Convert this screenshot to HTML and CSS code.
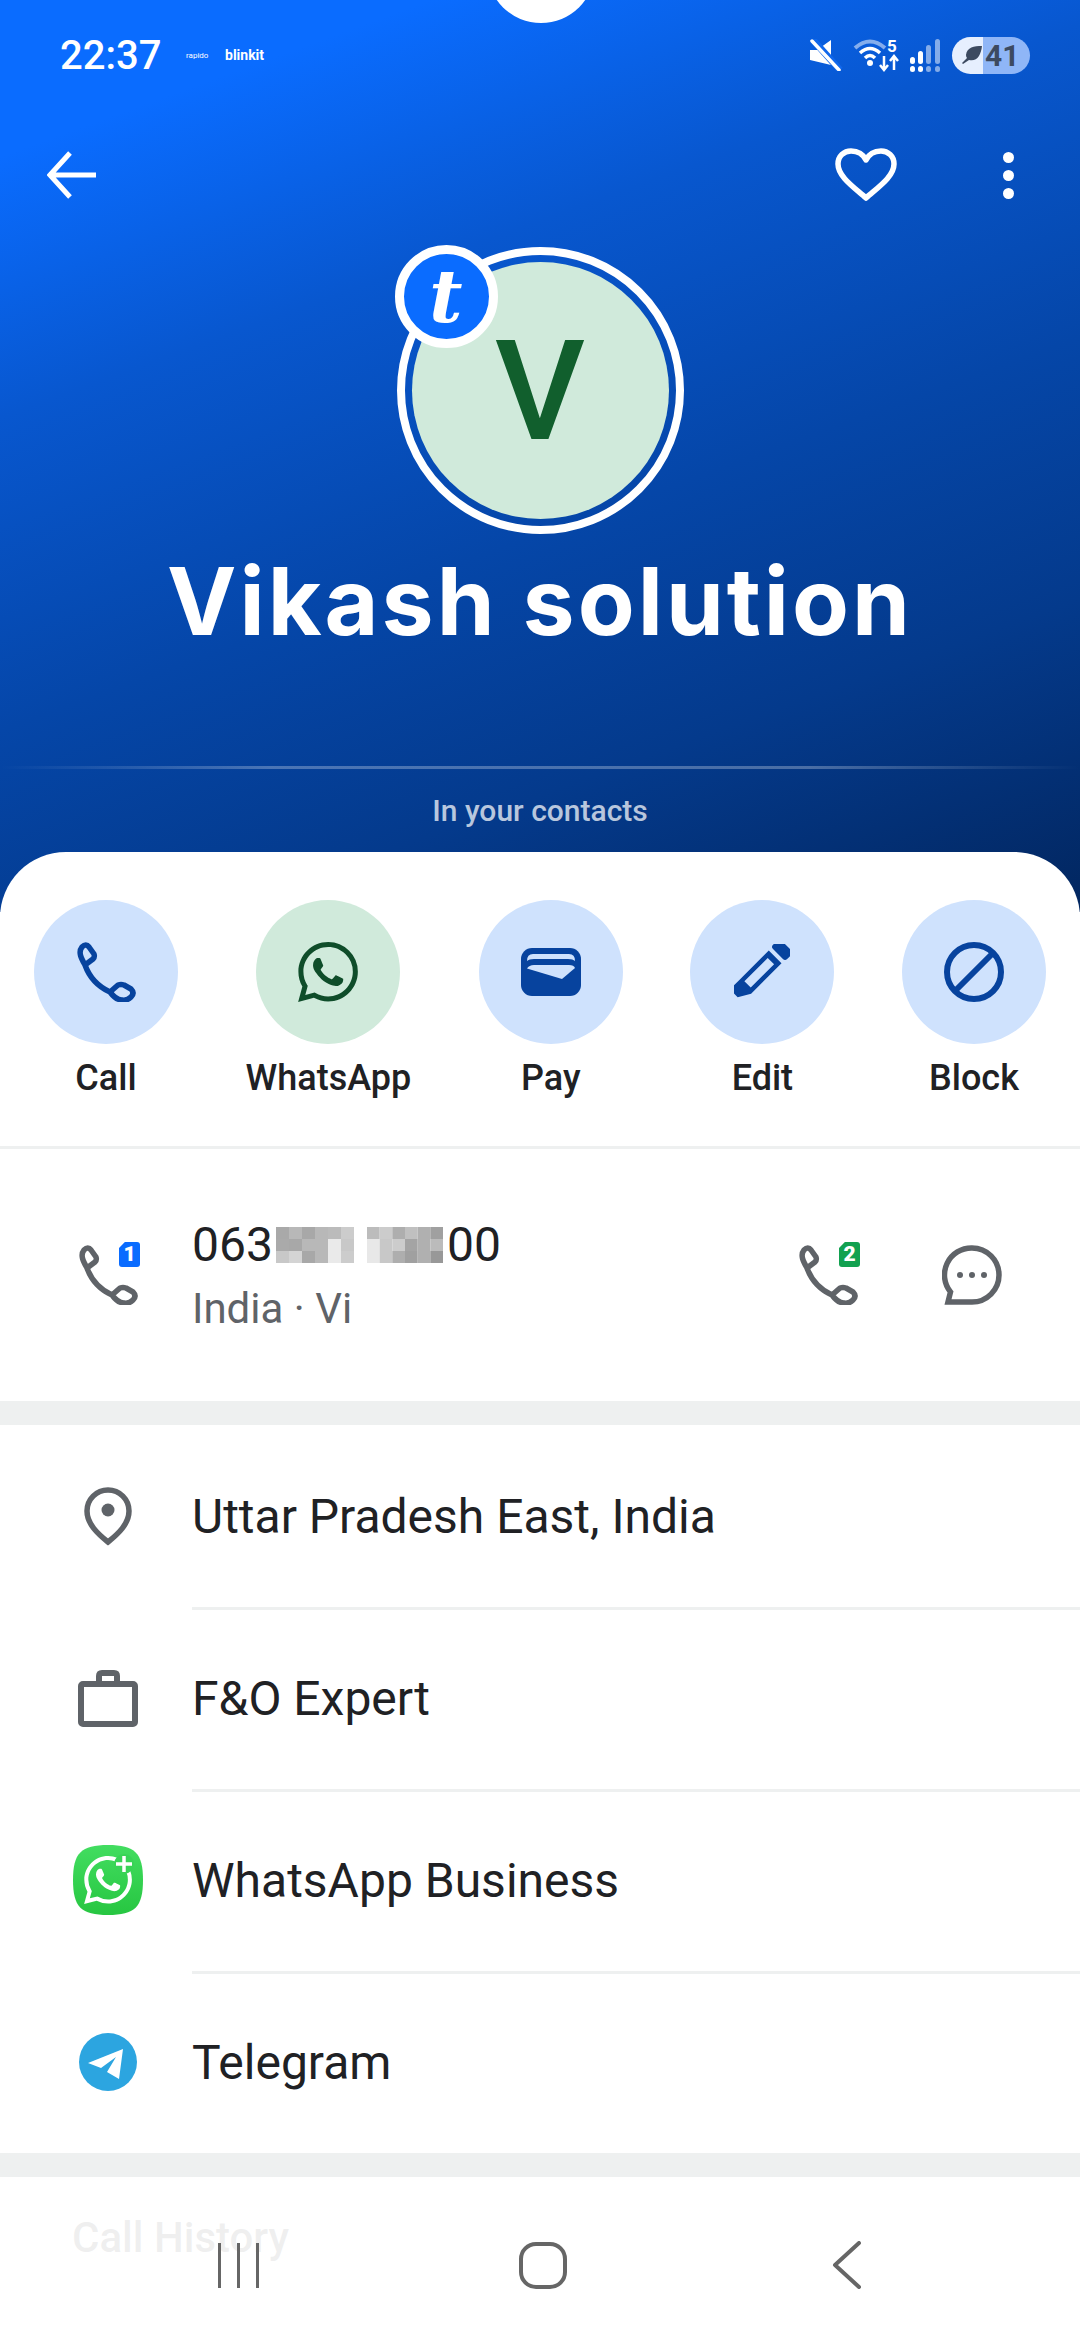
FILE: index.html
```html
<!DOCTYPE html>
<html lang="en">
<head>
    <meta charset="UTF-8">
    <meta name="viewport" content="width=device-width, initial-scale=1.0">
    <title>Vikash solution</title>
    <link rel="stylesheet" href="styles.css">
</head>
<body>

<svg class="sprites" width="0" height="0">
    <symbol id="phone" viewBox="0 0 60 60">
        <path d="M9 23C5 16 2 10 6 5Q10 1 13 5L18 12Q19 15 17 17L9 23ZM9 23C14 37 23 45 34 50L42 43Q45 42 48 43L55 47Q59 51 55 55Q51 59 46 58C42 58 37 54 34 50" fill="none" stroke="currentColor" stroke-width="5.5" stroke-linejoin="round" stroke-linecap="round"/>
    </symbol>
    <symbol id="whatsapp" viewBox="0 0 24 24">
        <path fill="currentColor" d="M17.472 14.382c-.297-.149-1.758-.867-2.03-.967-.273-.099-.471-.148-.67.15-.197.297-.767.966-.94 1.164-.173.199-.347.223-.644.075-.297-.15-1.255-.463-2.39-1.475-.883-.788-1.48-1.761-1.653-2.059-.173-.297-.018-.458.13-.606.134-.133.298-.347.446-.52.149-.174.198-.298.298-.497.099-.198.05-.371-.025-.52-.075-.149-.669-1.612-.916-2.207-.242-.579-.487-.5-.669-.51-.173-.008-.371-.01-.57-.01-.198 0-.52.074-.792.372-.272.297-1.04 1.016-1.04 2.479 0 1.462 1.065 2.875 1.213 3.074.149.198 2.096 3.2 5.077 4.487.709.306 1.262.489 1.694.625.712.227 1.36.195 1.871.118.571-.085 1.758-.719 2.006-1.413.248-.694.248-1.289.173-1.413-.074-.124-.272-.198-.57-.347m-5.421 7.403h-.004a9.87 9.87 0 01-5.031-1.378l-.361-.214-3.741.982.998-3.648-.235-.374a9.86 9.86 0 01-1.51-5.26c.001-5.45 4.436-9.884 9.888-9.884 2.64 0 5.122 1.03 6.988 2.898a9.825 9.825 0 012.893 6.994c-.003 5.45-4.437 9.884-9.885 9.884m8.413-18.297A11.815 11.815 0 0012.05 0C5.495 0 .16 5.335.157 11.892c0 2.096.547 4.142 1.588 5.945L.057 24l6.305-1.654a11.882 11.882 0 005.683 1.448h.005c6.554 0 11.89-5.335 11.893-11.893a11.821 11.821 0 00-3.48-8.413z"/>
    </symbol>
</svg>

<div class="screen">
    <header class="hero">
        <div class="camera"></div>

        <div class="status">
            <span class="time">22:37</span>
            <span class="notif-small">rapido</span>
            <span class="notif-big">blinkit</span>
            <div class="status-icons">
                <svg class="ic-mute" width="34" height="32" viewBox="0 0 34 32">
                    <path d="M1 11H8L22 1V26L1 21Z" fill="#fff"/>
                    <path d="M4 1L31 31" stroke="#1067ec" stroke-width="7"/>
                    <path d="M3 2L30 31" stroke="#fff" stroke-width="3.5" stroke-linecap="round"/>
                </svg>
                <svg class="ic-wifi" width="46" height="34" viewBox="0 0 46 34">
                    <path d="M2 10Q17 -3 32 10" fill="none" stroke="#fff" stroke-opacity=".5" stroke-width="4"/>
                    <path d="M7 15Q17 6 27 15" fill="none" stroke="#fff" stroke-width="3.5"/>
                    <path d="M12 20Q17 15 22 20" fill="none" stroke="#fff" stroke-width="3.5"/>
                    <circle cx="17" cy="25" r="3" fill="#fff"/>
                    <path d="M31 18V31M27 27L31 32L35 27M41 32V19M37 23L41 18L45 23" fill="none" stroke="#fff" stroke-width="2.5"/>
                </svg>
                <span class="wifi-num">5</span>
                <svg class="ic-signal" width="30" height="33" viewBox="0 0 30 33">
                    <g fill="#fff">
                        <rect x="0" y="18" width="5" height="7" rx="2.5"/>
                        <rect x="0" y="27" width="5" height="6" rx="2.5"/>
                        <rect x="8" y="12" width="5" height="13" rx="2.5"/>
                        <rect x="8" y="27" width="5" height="6" rx="2.5"/>
                    </g>
                    <g fill="#fff" fill-opacity=".5">
                        <rect x="16" y="6" width="5" height="19" rx="2.5"/>
                        <rect x="16" y="27" width="5" height="6" rx="2.5"/>
                        <rect x="25" y="0" width="5" height="25" rx="2.5"/>
                        <rect x="25" y="27" width="5" height="6" rx="2.5"/>
                    </g>
                </svg>
                <div class="battery">
                    <svg width="20" height="18" viewBox="0 0 20 18">
                        <path d="M20 0C12 0 5 1 4 9Q4 11 5 12L0 17L1 18L7 14C15 16 19 9 20 0Z" fill="#3c4a60"/>
                    </svg>
                    <span>41</span>
                </div>
            </div>
        </div>

        <div class="toolbar">
            <svg class="back" width="50" height="48" viewBox="0 0 50 48">
                <path d="M49 24H4M23 2L3 24L23 46" fill="none" stroke="#fff" stroke-width="5"/>
            </svg>
            <svg class="heart" width="62" height="54" viewBox="0 0 62 54">
                <path d="M31 50C20 40 3 29 3 16C3 8 9 3 16 3C22 3 28 6 31 12C34 6 40 3 46 3C53 3 59 8 59 16C59 29 42 40 31 50Z" fill="none" stroke="#fff" stroke-width="5.5" stroke-linejoin="round"/>
            </svg>
            <div class="dots"><i></i><i></i><i></i></div>
        </div>

        <div class="avatar">
            <div class="avatar-inner">V</div>
            <div class="badge"><span>t</span></div>
        </div>

        <h1 class="name">Vikash solution</h1>
        <div class="rule"></div>
        <p class="contacts">In your contacts</p>
    </header>

    <main class="sheet">
        <section class="actions">
            <div class="action">
                <div class="circle"><svg width="60" height="60"><use href="#phone"/></svg></div>
                <span>Call</span>
            </div>
            <div class="action">
                <div class="circle green"><svg width="60" height="60"><use href="#whatsapp"/></svg></div>
                <span>WhatsApp</span>
            </div>
            <div class="action">
                <div class="circle">
                    <svg width="60" height="48" viewBox="0 0 60 48">
                        <rect width="60" height="48" rx="11" fill="currentColor"/>
                        <path d="M6 13Q6 6 12 6H48Q54 6 54 13Q52 11 47 11H13Q8 11 6 13Z" fill="#cfe2fd"/>
                        <path d="M6 20.500Q8 17 13 17H48Q53 17 54 20L41 31Z" fill="#cfe2fd"/>
                    </svg>
                </div>
                <span>Pay</span>
            </div>
            <div class="action">
                <div class="circle">
                    <svg width="56" height="56" viewBox="0 0 56 56">
                        <g transform="rotate(45 27 27)" fill="currentColor">
                            <rect x="17" y="-9" width="20" height="12" rx="3"/>
                            <path fill-rule="evenodd" d="M18 7H36V50L29 62H18V50ZM22.500 13V46H31.500V13Z"/>
                        </g>
                    </svg>
                </div>
                <span>Edit</span>
            </div>
            <div class="action">
                <div class="circle">
                    <svg width="60" height="60" viewBox="0 0 60 60">
                        <circle cx="30" cy="30" r="27" fill="none" stroke="currentColor" stroke-width="6"/>
                        <path d="M50 10L10 50" stroke="currentColor" stroke-width="6"/>
                    </svg>
                </div>
                <span>Block</span>
            </div>
        </section>

        <section class="number-row">
            <div class="phone-ic">
                <svg width="60" height="60"><use href="#phone"/></svg>
                <b class="sim blue">1</b>
            </div>
            <div class="number-text">
                <div class="number">063<svg class="blur" width="78" height="36" viewBox="0 0 6 3" preserveAspectRatio="none">
                    <rect x="0" y="0" width="1" height="1" fill="#a9a9a9"/><rect x="1" y="0" width="1" height="1" fill="#b8b8b8"/><rect x="2" y="0" width="1" height="1" fill="#a8a8a8"/><rect x="3" y="0" width="1" height="1" fill="#b8b8b8"/><rect x="4" y="0" width="1" height="1" fill="#bbb"/><rect x="5" y="0" width="1" height="1" fill="#ccc"/>
                    <rect x="0" y="1" width="1" height="1" fill="#aaa"/><rect x="1" y="1" width="1" height="1" fill="#a8a8a8"/><rect x="2" y="1" width="1" height="1" fill="#b8b8b8"/><rect x="3" y="1" width="1" height="1" fill="#b8b8b8"/><rect x="4" y="1" width="1" height="1" fill="#eaeaea"/><rect x="5" y="1" width="1" height="1" fill="#c8c8c8"/>
                    <rect x="0" y="2" width="1" height="1" fill="#c8c8c8"/><rect x="1" y="2" width="1" height="1" fill="#d4d4d4"/><rect x="2" y="2" width="1" height="1" fill="#a8a8a8"/><rect x="3" y="2" width="1" height="1" fill="#b8b8b8"/><rect x="4" y="2" width="1" height="1" fill="#eaeaea"/><rect x="5" y="2" width="1" height="1" fill="#ccc"/>
                </svg><span class="blur-gap"></span><svg class="blur-end" width="76" height="36" viewBox="0 0 6 3" preserveAspectRatio="none">
                    <rect x="0" y="0" width="1" height="1" fill="#bcbcbc"/><rect x="1" y="0" width="1" height="1" fill="#ccc"/><rect x="2" y="0" width="1" height="1" fill="#aeaeae"/><rect x="3" y="0" width="1" height="1" fill="#c0c0c0"/><rect x="4" y="0" width="1" height="1" fill="#b0b0b0"/><rect x="5" y="0" width="1" height="1" fill="#a0a0a0"/>
                    <rect x="0" y="1" width="1" height="1" fill="#e8e8e8"/><rect x="1" y="1" width="1" height="1" fill="#c8c8c8"/><rect x="2" y="1" width="1" height="1" fill="#ccc"/><rect x="3" y="1" width="1" height="1" fill="#a4a4a4"/><rect x="4" y="1" width="1" height="1" fill="#b0b0b0"/><rect x="5" y="1" width="1" height="1" fill="#bbb"/>
                    <rect x="0" y="2" width="1" height="1" fill="#e8e8e8"/><rect x="1" y="2" width="1" height="1" fill="#c8c8c8"/><rect x="2" y="2" width="1" height="1" fill="#aeaeae"/><rect x="3" y="2" width="1" height="1" fill="#a0a0a0"/><rect x="4" y="2" width="1" height="1" fill="#b0b0b0"/><rect x="5" y="2" width="1" height="1" fill="#989898"/>
                </svg>00</div>
                <div class="carrier">India · Vi</div>
            </div>
            <div class="phone-ic second">
                <svg width="60" height="60"><use href="#phone"/></svg>
                <b class="sim green">2</b>
            </div>
            <svg class="message" width="60" height="60" viewBox="0 0 60 60">
                <path d="M30 3A27 27 0 1 1 30 57H6L8.500 47A27 27 0 0 1 30 3Z" fill="none" stroke="currentColor" stroke-width="5.500"/>
                <circle cx="18" cy="30" r="3" fill="currentColor"/>
                <circle cx="30" cy="30" r="3" fill="currentColor"/>
                <circle cx="42" cy="30" r="3" fill="currentColor"/>
            </svg>
        </section>

        <div class="band"></div>

        <section class="details">
            <div class="detail">
                <div class="slot">
                    <svg width="48" height="60" viewBox="0 0 48 60">
                        <path d="M24 56C14 48 3 38 3 25A21 21 0 0 1 45 25C45 38 34 48 24 56Z" fill="none" stroke="currentColor" stroke-width="5.500"/>
                        <circle cx="24" cy="24" r="6.500" fill="currentColor"/>
                    </svg>
                </div>
                <span>Uttar Pradesh East, India</span>
            </div>
            <div class="detail">
                <div class="slot">
                    <svg width="60" height="57" viewBox="0 0 60 57">
                        <rect x="3" y="14" width="54" height="40" rx="2" fill="none" stroke="currentColor" stroke-width="6"/>
                        <path d="M21 14V6Q21 3 24 3H36Q39 3 39 6V14" fill="none" stroke="currentColor" stroke-width="6"/>
                    </svg>
                </div>
                <span>F&amp;O Expert</span>
            </div>
            <div class="detail">
                <div class="slot">
                    <svg class="wa-biz" width="70" height="70" viewBox="0 0 70 70">
                        <defs>
                            <linearGradient id="wa-grad" x1="0" y1="0" x2="0" y2="1">
                                <stop offset="0" stop-color="#42dd60"/>
                                <stop offset="1" stop-color="#27c641"/>
                            </linearGradient>
                        </defs>
                        <path d="M35 0C62 0 70 8 70 35C70 62 62 70 35 70C8 70 0 62 0 35C0 8 8 0 35 0Z" fill="url(#wa-grad)"/>
                        <use href="#whatsapp" x="11" y="11" width="48" height="48" color="#fff"/>
                        <circle cx="51" cy="19" r="10" fill="#38d356"/>
                        <path d="M51 11V27M43 19H59" stroke="#fff" stroke-width="3.500"/>
                    </svg>
                </div>
                <span>WhatsApp Business</span>
            </div>
            <div class="detail">
                <div class="slot">
                    <svg width="58" height="58" viewBox="0 0 58 58">
                        <circle cx="29" cy="29" r="29" fill="#2ca5e0"/>
                        <path d="M9 30L44 16L40 46L28 39L37 24L22 35Z" fill="#fff"/>
                    </svg>
                </div>
                <span>Telegram</span>
            </div>
        </section>

        <div class="band"></div>
        <h2 class="history">Call History</h2>
    </main>

    <!-- system nav sits over the scrolled content -->
    <nav class="navbar">
        <div class="recents"><i></i><i></i><i></i></div>
        <div class="home"></div>
        <svg width="30" height="48" viewBox="0 0 30 48">
            <path d="M27 2L3 24L27 46" fill="none" stroke="#666" stroke-width="4" stroke-linejoin="round" stroke-linecap="round"/>
        </svg>
    </nav>
</div>

</body>
</html>
```

FILE: styles.css
```css
/* Page */
* {
    box-sizing: border-box;
}
body {
    margin: 0;
    font-family: Roboto, Arial, sans-serif;
    background-color: #fff;
    color: #202124;
}
.sprites {
    display: block;
    height: 0;
}
.screen {
    position: relative;
    width: 1080px;
    height: 2340px;
    overflow: hidden;
}

/* Blue header */
.hero {
    position: relative;
    height: 912px;
    background: linear-gradient(160deg, #0a6cff 0%, #0a6cff 12%, #0857cf 32%, #0546a8 56%, #043a8c 76%, #02265f 100%);
    color: #fff;
}
.camera {
    position: absolute;
    left: 487px;
    top: -85px;
    width: 108px;
    height: 108px;
    border-radius: 50%;
    background-color: #fff;
}
.status {
    display: flex;
    align-items: center;
    height: 110px;
    padding: 0 50px 0 60px;
}
.time {
    font-size: 40px;
    font-weight: 500;
    width: 126px;
}
.notif-small {
    font-size: 8px;
    width: 39px;
}
.notif-big {
    font-size: 14px;
    font-weight: 700;
}
.status-icons {
    display: flex;
    align-items: center;
    margin-left: auto;
    position: relative;
}
.ic-wifi {
    margin-left: 10px;
}
.wifi-num {
    position: absolute;
    left: 78px;
    top: -1px;
    font-size: 17px;
    font-weight: 700;
}
.ic-signal {
    margin-left: 11px;
}
.battery {
    display: flex;
    align-items: center;
    gap: 3px;
    margin-left: 12px;
    width: 78px;
    height: 37px;
    padding-left: 10px;
    border-radius: 19px;
    background: linear-gradient(90deg, #e6effe 0, #e6effe 31px, #8fb6f7 31px, #8fb6f7 100%);
    color: #3c4a60;
    font-size: 30px;
    font-weight: 700;
}

.toolbar {
    display: flex;
    align-items: center;
    height: 130px;
    padding: 0 66px 0 47px;
}
.back {
    margin-right: auto;
}
.dots {
    display: flex;
    flex-direction: column;
    gap: 7px;
    margin-left: 106px;
}
.dots i {
    display: block;
    width: 11px;
    height: 11px;
    border-radius: 50%;
    background-color: #fff;
}

.avatar {
    position: relative;
    width: 287px;
    height: 287px;
    margin: 7px auto 0;
    padding: 7px;
    border: 8px solid #fff;
    border-radius: 50%;
}
.avatar-inner {
    display: flex;
    align-items: center;
    justify-content: center;
    width: 100%;
    height: 100%;
    border-radius: 50%;
    background-color: #d0eadb;
    color: #115f2d;
    font-size: 140px;
    font-weight: 500;
}
.badge {
    position: absolute;
    left: -10px;
    top: -10px;
    display: flex;
    align-items: center;
    justify-content: center;
    width: 103px;
    height: 103px;
    border: 9px solid #fff;
    border-radius: 50%;
    background-color: #0a6cff;
    color: #fff;
    font-family: "DejaVu Serif", serif;
    font-size: 72px;
    font-style: italic;
    font-weight: 700;
    line-height: 1;
}
.name {
    margin: 0;
    padding-top: 12px;
    height: 130px;
    text-align: center;
    font-family: Inter, Arial, sans-serif;
    font-size: 93px;
    font-weight: 700;
    letter-spacing: 3px;
    line-height: 110px;
    white-space: nowrap;
}
.rule {
    height: 3px;
    margin-top: 102px;
    background: linear-gradient(90deg, rgba(255, 255, 255, 0), rgba(255, 255, 255, 0.28) 25%, rgba(255, 255, 255, 0.28) 75%, rgba(255, 255, 255, 0));
}
.contacts {
    margin: 24px 0 0;
    text-align: center;
    font-size: 30px;
    font-weight: 500;
    line-height: 36px;
    color: rgba(255, 255, 255, 0.72);
}

/* White sheet */
.sheet {
    position: relative;
    margin-top: -60px;
    background-color: #fff;
    border-radius: 66px 66px 0 0;
}
.actions {
    display: flex;
    justify-content: space-between;
    height: 297px;
    padding: 48px 34px 0;
    border-bottom: 3px solid #eef0f0;
}
.action {
    display: flex;
    flex-direction: column;
    align-items: center;
    gap: 14px;
    font-size: 36px;
    font-weight: 500;
    line-height: 40px;
}
.circle {
    display: flex;
    align-items: center;
    justify-content: center;
    width: 144px;
    height: 144px;
    border-radius: 50%;
    background-color: #cfe2fd;
    color: #07439e;
}
.circle.green {
    background-color: #d0eadb;
    color: #0f4d2a;
}

.number-row {
    display: flex;
    align-items: center;
    height: 252px;
    padding: 0 78px;
    color: #5f6368;
}
.phone-ic {
    position: relative;
    width: 60px;
    height: 60px;
}
.phone-ic svg {
    display: block;
}
.sim {
    position: absolute;
    left: 41px;
    top: -3px;
    width: 21px;
    height: 25px;
    border-radius: 3px;
    clip-path: polygon(28% 0, 100% 0, 100% 100%, 0 100%, 0 24%);
    color: #fff;
    font-size: 21px;
    font-weight: 900;
    line-height: 25px;
    text-align: center;
}
.sim.blue {
    background-color: #0a6cff;
}
.sim.green {
    background-color: #12a150;
}
.number-text {
    margin-left: 54px;
}
.number {
    display: flex;
    align-items: center;
    color: #202124;
    font-size: 48px;
    line-height: 54px;
}
.blur {
    margin-left: 3px;
}
.blur-gap {
    width: 13px;
}
.blur-end {
    margin-right: 4px;
}
.carrier {
    margin-top: 13px;
    font-size: 42px;
    line-height: 48px;
}
.second {
    margin-left: auto;
}
.message {
    margin-left: 84px;
}

.band {
    height: 24px;
    background-color: #eef0f0;
}

.detail {
    display: flex;
    align-items: center;
    height: 182px;
    padding-left: 78px;
    font-size: 48px;
    position: relative;
}
.detail + .detail::before {
    content: "";
    position: absolute;
    left: 192px;
    right: 0;
    top: 0;
    height: 3px;
    background-color: #eef0f0;
}
.slot {
    display: flex;
    align-items: center;
    justify-content: center;
    width: 60px;
    margin-right: 54px;
    color: #5f6368;
}
.wa-biz {
    flex-shrink: 0;
}
.history {
    margin: 36px 0 0 72px;
    font-size: 42px;
    font-weight: 500;
    line-height: 50px;
    color: #202124;
}

/* System navigation */
.navbar {
    position: absolute;
    left: 0;
    right: 0;
    bottom: 0;
    height: 150px;
    display: flex;
    align-items: center;
    background-color: rgba(255, 255, 255, 0.93);
}
.recents {
    display: flex;
    gap: 16px;
    margin-left: 218px;
}
.recents i {
    display: block;
    width: 3px;
    height: 45px;
    background-color: #666;
}
.home {
    width: 48px;
    height: 47px;
    margin-left: 260px;
    border: 4px solid #666;
    border-radius: 17px;
}
.navbar svg {
    margin-left: 265px;
}
```
